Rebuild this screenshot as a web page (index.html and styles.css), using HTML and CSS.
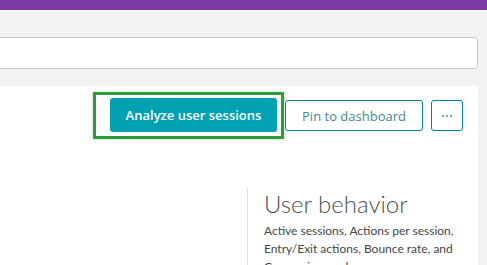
FILE: index.html
```html
<!DOCTYPE html>
<html lang="en">
<head>
  <meta charset="UTF-8" />
  <meta name="viewport" content="width=device-width, initial-scale=1" />
  <title>Application overview</title>
  <link rel="stylesheet" href="styles.css">
</head>
<body>
  <div class="topbar"></div>

  <div class="search-row">
    <input type="text" class="search" />
  </div>

  <div class="panel">
    <div class="toolbar">
      <div class="highlight">
        <button class="btn btn-primary">Analyze user sessions</button>
      </div>
      <button class="btn btn-secondary">Pin to dashboard</button>
      <button class="btn btn-secondary btn-more" aria-label="More">
        <svg width="12" height="4" viewBox="0 0 12 4">
          <circle cx="2" cy="2" r="1.2" />
          <circle cx="6" cy="2" r="1.2" />
          <circle cx="10" cy="2" r="1.2" />
        </svg>
      </button>
    </div>

    <div class="info">
      <div class="info-block">
        <h2>User behavior</h2>
        <p>Active sessions, Actions per session, Entry/Exit actions, Bounce rate, and Conversion goals</p>
      </div>
    </div>
  </div>
</body>
</html>
```

FILE: styles.css
```css
html, body {
  margin: 0;
  padding: 0;
  height: 100%;
  overflow: hidden;
  font-family: "Open Sans", "Noto Sans", sans-serif;
  background-color: #f2f2f2;
  color: #454646;
}

.topbar {
  height: 10px;
  background-color: #7a3aa3;
}

.search-row {
  padding: 27px 9px 0 0;
  height: 76px;
  box-sizing: border-box;
}

.search {
  display: block;
  width: calc(100% + 6px);
  margin-left: -6px;
  height: 32px;
  border: 1px solid #c9c9c9;
  border-radius: 3px;
  background: #fff;
  box-sizing: border-box;
}

.panel {
  margin-right: 9px;
  background: #fff;
  border-radius: 0 3px 0 0;
  height: 179px;
  overflow: hidden;
}

.toolbar {
  display: flex;
  justify-content: flex-end;
  align-items: center;
  padding: 6px 15px 0 0;
}

.highlight {
  border: 3px solid #2f9a3b;
  padding: 3px 4px 4px 14px;
  margin-right: 1px;
  box-shadow: 0 0 3px rgba(47, 154, 59, 0.35);
}

.btn {
  font-family: inherit;
  font-size: 13px;
  border-radius: 3px;
  cursor: pointer;
  box-sizing: border-box;
}

.btn-primary {
  display: block;
  width: 167px;
  height: 34px;
  background-color: #00a1b2;
  border: none;
  color: #fff;
  font-weight: 600;
}

.btn-secondary {
  height: 31px;
  width: 138px;
  background: #fff;
  border: 1px solid #00848f;
  color: #3f8a96;
}

.btn-more {
  width: 32px;
  margin-left: 8px;
  padding: 0;
  display: flex;
  align-items: center;
  justify-content: center;
}

.btn-more svg {
  fill: #7aa8b0;
}

.info {
  padding: 49px 0 0 247px;
}

.info-block {
  border-left: 1px solid #e0e0e0;
  padding-left: 16px;
  font-family: Lato, "Open Sans", sans-serif;
}

.info-block h2 {
  margin: 0;
  padding-top: 2px;
  font-size: 24px;
  font-weight: 300;
  line-height: 28px;
  color: #4d4f50;
}

.info-block p {
  margin: 4px 0 0;
  font-size: 12px;
  line-height: 18px;
  width: 200px;
  color: #454646;
}
```
